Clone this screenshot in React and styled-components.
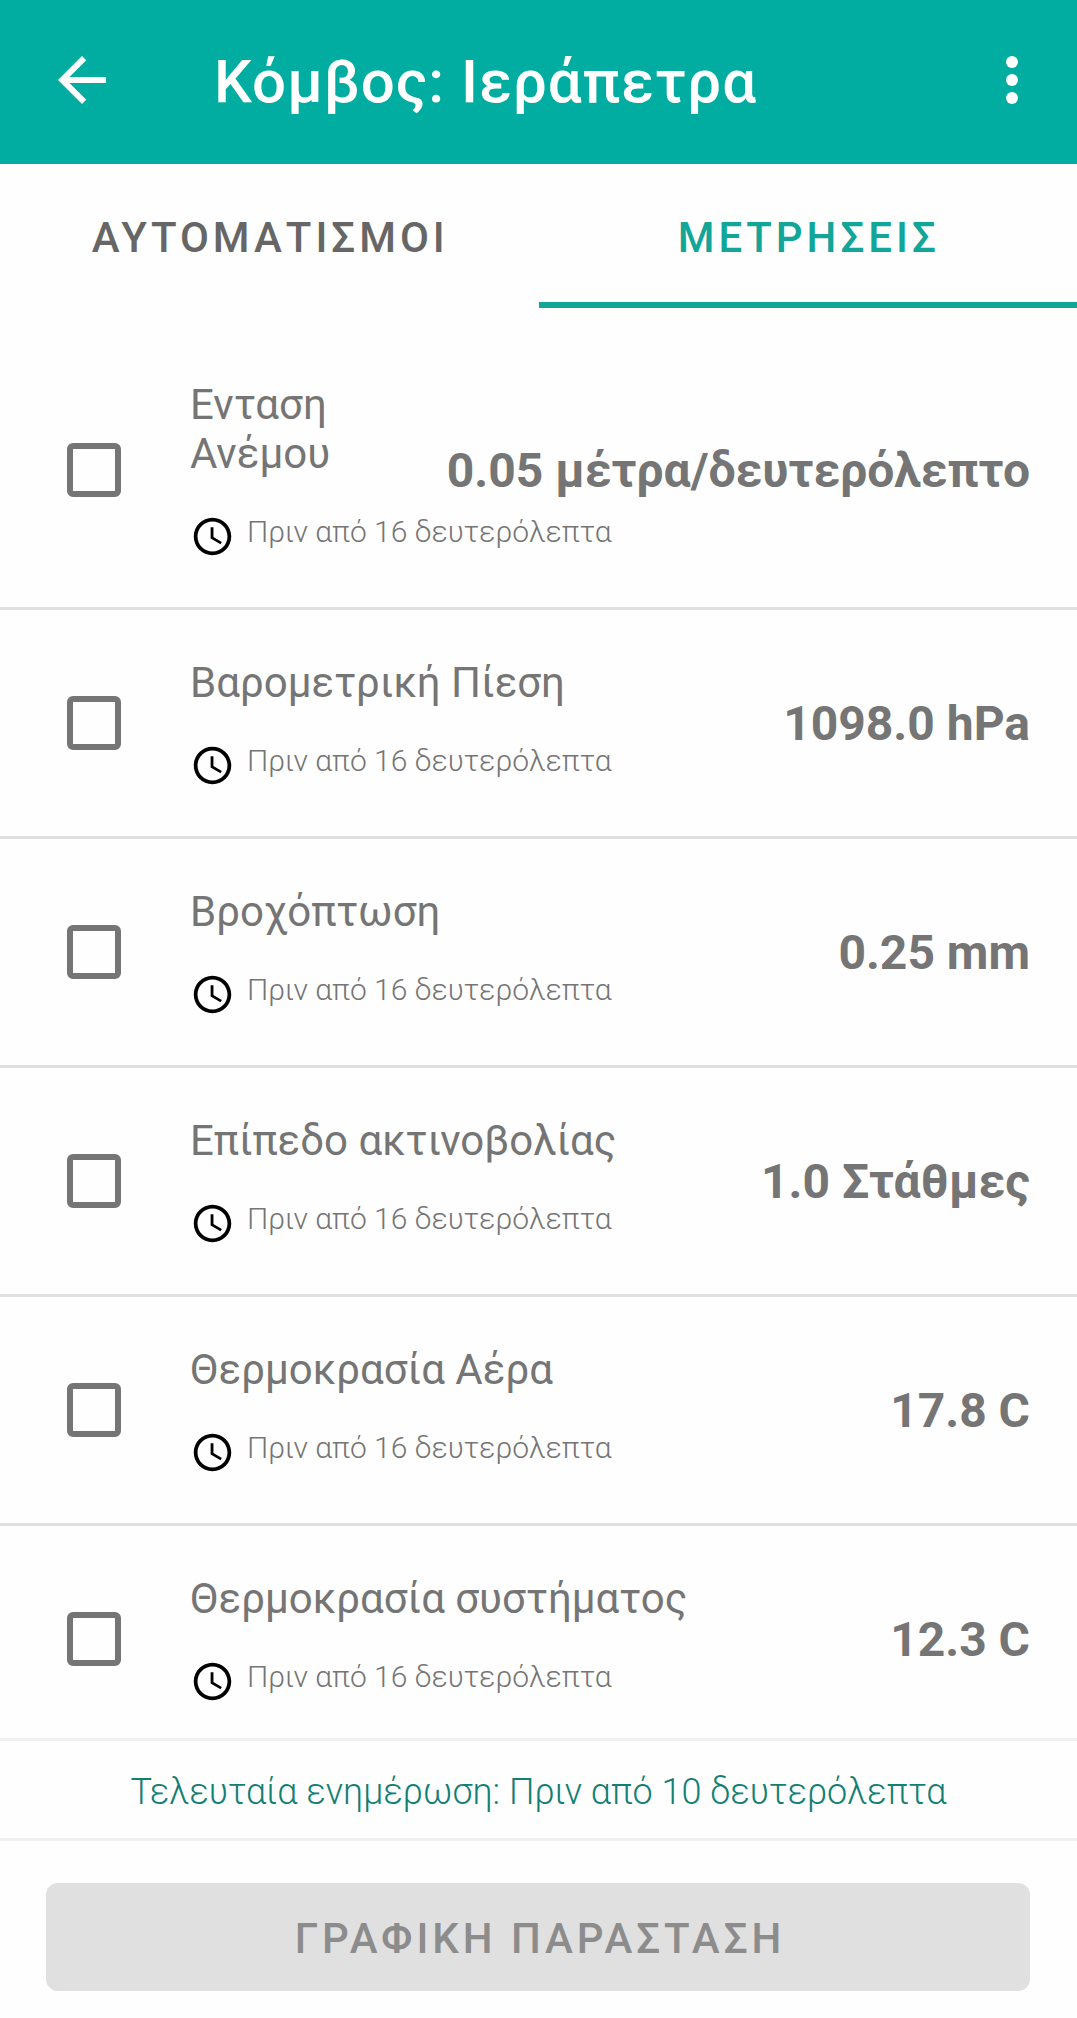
import React, { useState } from "react";
import styled, { createGlobalStyle } from "styled-components";

const GlobalStyle = createGlobalStyle`
  * { box-sizing: border-box; }
  body {
    margin: 0;
    background: #fefefe;
    font-family: Roboto, "Noto Sans", sans-serif;
  }
  button { font-family: inherit; }
`;

const Screen = styled.div`
  display: flex;
  flex-direction: column;
  height: 100vh;
  overflow: hidden;
`;

const AppBar = styled.header`
  flex: none;
  display: flex;
  align-items: center;
  height: 164px;
  padding: 0 29px 4px 46px;
  background: #00ada0;
  color: #fff;
`;

const IconButton = styled.button`
  flex: none;
  display: flex;
  padding: 0;
  border: 0;
  background: none;
  color: inherit;
  cursor: pointer;
`;

const Title = styled.h1`
  flex: 1;
  min-width: 0;
  margin: 0;
  padding: 4px 24px 0 96px;
  font-size: 60px;
  line-height: 70px;
  font-weight: 500;
  letter-spacing: 1px;
  white-space: nowrap;
`;

const Tabs = styled.nav`
  flex: none;
  display: flex;
  height: 144px;
`;

const Tab = styled.button`
  flex: 1;
  padding: 8px 0 0 2px;
  border: 0;
  border-bottom: 6px solid ${(p) => (p.$active ? "#12a59a" : "transparent")};
  background: none;
  color: ${(p) => (p.$active ? "#12a59a" : "#666")};
  font-size: 42px;
  line-height: 49px;
  font-weight: 500;
  letter-spacing: 4px;
  cursor: pointer;
`;

const List = styled.ul`
  flex: 1;
  min-height: 0;
  margin: 0;
  padding: 24px 0 0;
  list-style: none;
  overflow-y: auto;
  scrollbar-width: none;
`;

const Row = styled.li`
  display: flex;
  align-items: center;
  padding: 48px 47px 48px 67px;
  border-bottom: 3px solid #e0e0e0;
  color: #757575;
`;

const Checkbox = styled.input`
  appearance: none;
  flex: none;
  width: 54px;
  height: 54px;
  margin: 0 69px 0 0;
  border: 6px solid #757575;
  border-radius: 6px;
  cursor: pointer;

  &:checked {
    background: #12a59a;
    border-color: #12a59a;
  }
`;

const Details = styled.div`
  flex: 1;
  min-width: 0;
  display: flex;
  flex-direction: column;
  gap: 36px;
`;

const Name = styled.label`
  font-size: 42px;
  line-height: 49px;
`;

const Age = styled.div`
  display: flex;
  gap: 12px;
  font-size: 30px;
  line-height: 35px;
  font-weight: 300;
  white-space: nowrap;
`;

const ClockSvg = styled.svg`
  flex: none;
  width: 45px;
  height: 45px;
  fill: #000;
`;

const Value = styled.strong`
  flex: none;
  padding-top: 2px;
  font-size: 48px;
  line-height: 56px;
  font-weight: 700;
`;

const LastUpdate = styled.p`
  flex: none;
  margin: 0;
  padding: 30px 24px 25px;
  border: solid #f0f0f0;
  border-width: 3px 0;
  color: #137f74;
  font-size: 36px;
  line-height: 42px;
  font-weight: 300;
  text-align: center;
`;

const Footer = styled.footer`
  flex: none;
  padding: 42px 47px 27px 46px;
`;

const ChartButton = styled.button`
  display: block;
  width: 100%;
  height: 108px;
  padding: 2px 0 0 4px;
  border: 0;
  border-radius: 12px;
  background: #e0e0e0;
  color: #8c8c8c;
  font-size: 42px;
  line-height: 49px;
  font-weight: 500;
  letter-spacing: 4px;
`;

const BackIcon = () => (
  <svg width="72" height="72" viewBox="0 0 24 24" fill="currentColor" aria-hidden="true">
    <path d="M20 11H7.83l5.59-5.59L12 4l-8 8 8 8 1.41-1.41L7.83 13H20v-2z" />
  </svg>
);

const MoreIcon = () => (
  <svg width="72" height="72" viewBox="0 0 24 24" fill="currentColor" aria-hidden="true">
    <circle cx="12" cy="6" r="2" />
    <circle cx="12" cy="12" r="2" />
    <circle cx="12" cy="18" r="2" />
  </svg>
);

const ClockIcon = () => (
  <ClockSvg viewBox="0 0 24 24" aria-hidden="true">
    <path d="M11.99 2C6.47 2 2 6.48 2 12s4.47 10 9.99 10C17.52 22 22 17.52 22 12S17.52 2 11.99 2zM12 20c-4.42 0-8-3.58-8-8s3.58-8 8-8 8 3.58 8 8-3.58 8-8 8z" />
    <path d="M12.5 7H11v6l5.25 3.15.75-1.23-4.5-2.67z" />
  </ClockSvg>
);

const measurements = [
  { id: "wind", name: "Ενταση Ανέμου", value: "0.05 μέτρα/δευτερόλεπτο" },
  { id: "pressure", name: "Βαρομετρική Πίεση", value: "1098.0 hPa" },
  { id: "rain", name: "Βροχόπτωση", value: "0.25 mm" },
  { id: "radiation", name: "Επίπεδο ακτινοβολίας", value: "1.0 Στάθμες" },
  { id: "air", name: "Θερμοκρασία Αέρα", value: "17.8 C" },
  { id: "system", name: "Θερμοκρασία συστήματος", value: "12.3 C" },
];

function Measurement({ id, name, value }) {
  return (
    <Row>
      <Checkbox type="checkbox" id={id} />
      <Details>
        <Name htmlFor={id}>{name}</Name>
        <Age>
          <ClockIcon />
          <span>Πριν από 16 δευτερόλεπτα</span>
        </Age>
      </Details>
      <Value>{value}</Value>
    </Row>
  );
}

export default function App() {
  const [tab, setTab] = useState("measurements");
  return (
    <Screen>
      <GlobalStyle />
      <AppBar>
        <IconButton type="button" aria-label="Πίσω">
          <BackIcon />
        </IconButton>
        <Title>Κόμβος: Ιεράπετρα</Title>
        <IconButton type="button" aria-label="Μενού">
          <MoreIcon />
        </IconButton>
      </AppBar>
      <Tabs>
        <Tab type="button" $active={tab === "automations"} onClick={() => setTab("automations")}>
          ΑΥΤΟΜΑΤΙΣΜΟΙ
        </Tab>
        <Tab type="button" $active={tab === "measurements"} onClick={() => setTab("measurements")}>
          ΜΕΤΡΗΣΕΙΣ
        </Tab>
      </Tabs>
      <List>
        {measurements.map((m) => (
          <Measurement key={m.id} {...m} />
        ))}
      </List>
      <LastUpdate>Τελευταία ενημέρωση: Πριν από 10 δευτερόλεπτα</LastUpdate>
      <Footer>
        <ChartButton type="button" disabled>
          ΓΡΑΦΙΚΗ ΠΑΡΑΣΤΑΣΗ
        </ChartButton>
      </Footer>
    </Screen>
  );
}
